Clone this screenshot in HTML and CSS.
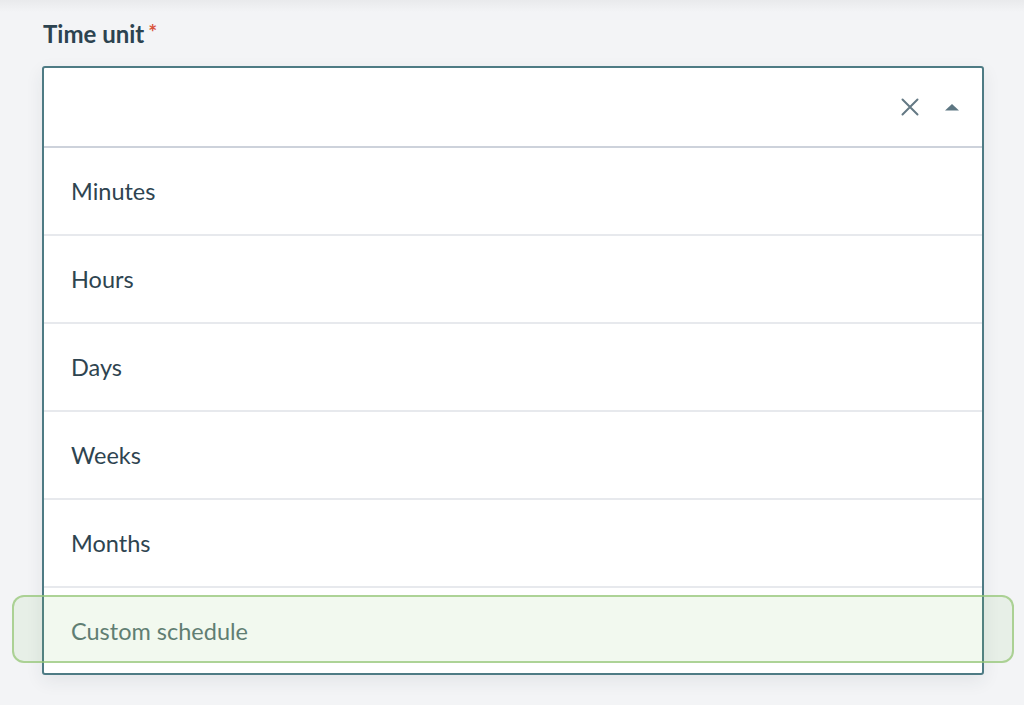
FILE: index.html
```html
<!DOCTYPE html>
<html lang="en">
<head>
<meta charset="utf-8">
<title>Time unit</title>
<link rel="stylesheet" href="styles.css">
</head>
<body>
<div class="page">
  <div class="field">
    <div class="field-label">Time unit<span class="req">*</span></div>
    <div class="select">
      <div class="control">
        <div class="value"></div>
        <div class="indicators">
          <svg class="clear" width="20" height="20" viewBox="0 0 20 20" aria-hidden="true">
            <path d="M2.5 2.5 L17.5 17.5 M17.5 2.5 L2.5 17.5" stroke="#647984" stroke-width="2" stroke-linecap="round" fill="none"/>
          </svg>
          <svg class="caret" width="16" height="8" viewBox="0 0 16 8" aria-hidden="true">
            <path d="M1 7.5 L8 1 L15 7.5 Z" fill="#5d7682"/>
          </svg>
        </div>
      </div>
      <ul class="menu">
        <li class="option">Minutes</li>
        <li class="option">Hours</li>
        <li class="option">Days</li>
        <li class="option">Weeks</li>
        <li class="option">Months</li>
        <li class="option option-custom">Custom schedule</li>
      </ul>
    </div>
    <div class="highlight"></div>
  </div>
</div>
</body>
</html>
```
FILE: styles.css
```css
html, body {
  margin: 0;
  padding: 0;
}
body {
  background: #f3f4f6;
  font-family: "Lato", "Liberation Sans", sans-serif;
  color: #2e4450;
  height: 705px;
  overflow: hidden;
}
.page {
  padding: 18px 40px 0 42px;
  background: linear-gradient(#e9eaec 0, #f3f4f6 12px);
  height: 705px;
  box-sizing: border-box;
}
.field {
  position: relative;
}
.field-label {
  font-weight: 700;
  font-size: 24px;
  line-height: 32px;
  padding-left: 1px;
  margin-bottom: 15px;
  color: #2c4350;
}
.req {
  color: #d9533b;
  font-size: 21px;
  font-weight: 700;
  margin-left: 4px;
  position: relative;
  top: -3px;
}
.select {
  width: 942px;
  box-sizing: border-box;
  border: 2px solid #4e7b84;
  border-radius: 3px;
  background: #fff;
  box-shadow: 0 6px 18px rgba(40, 50, 60, 0.08);
}
.control {
  height: 78px;
  display: flex;
  align-items: center;
  justify-content: space-between;
  border-bottom: 2px solid #cdd2db;
}
.value {
  flex: 1;
}
.indicators {
  display: flex;
  align-items: center;
  gap: 24px;
  padding-right: 22px;
}
.clear {
  display: block;
}
.caret {
  display: block;
}
.menu {
  list-style: none;
  margin: 0;
  padding: 0;
}
.option {
  height: 86px;
  display: flex;
  align-items: center;
  padding-left: 27px;
  font-size: 23.5px;
  color: #2e4450;
  border-bottom: 2px solid #e7e9ed;
}
.option:last-child {
  border-bottom: none;
  height: 85px;
}
.option-custom {
  color: #5d7775;
}
.highlight {
  position: absolute;
  left: -30px;
  top: 577px;
  width: 1002px;
  height: 68px;
  box-sizing: border-box;
  border: 2px solid rgba(150, 198, 120, 0.75);
  border-radius: 12px;
  background: rgba(130, 195, 100, 0.1);
}
```
